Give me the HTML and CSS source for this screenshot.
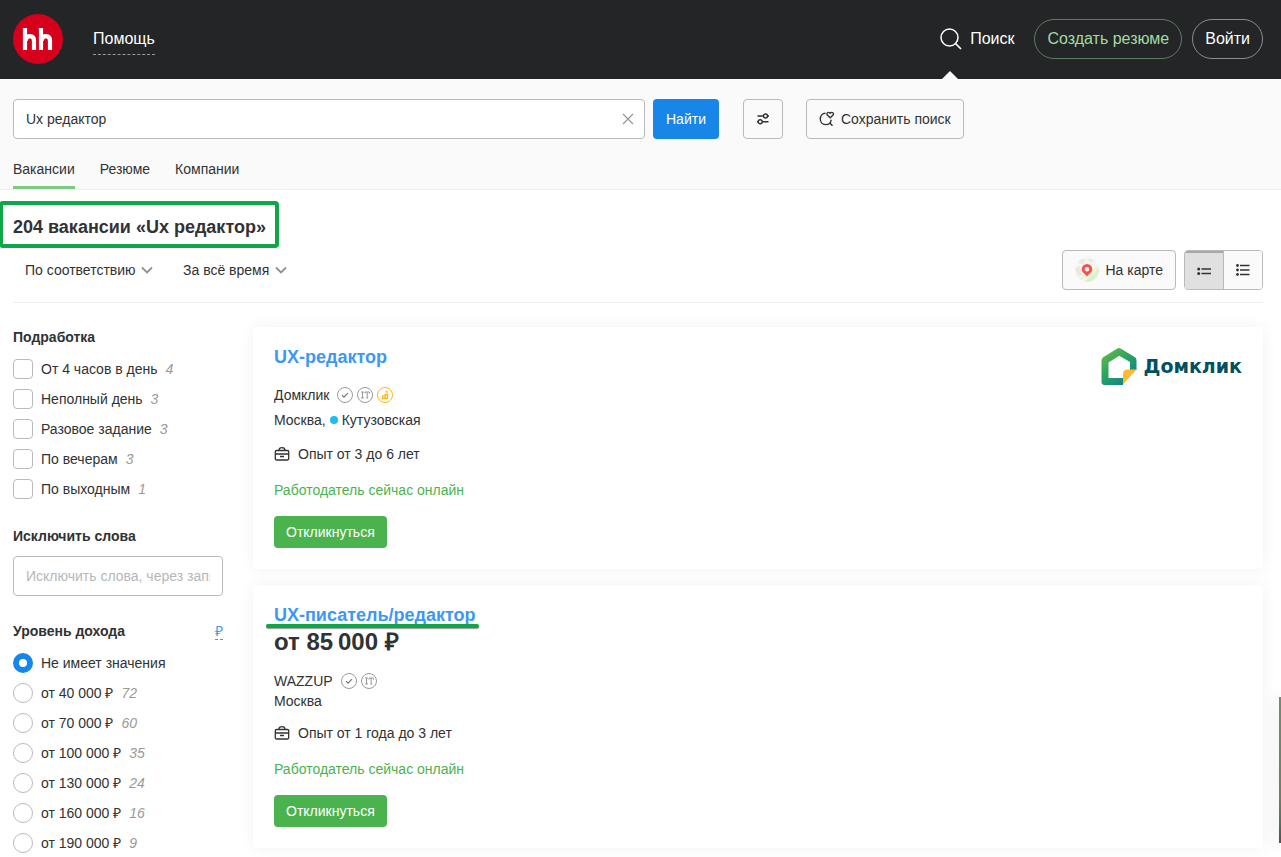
FILE: index.html
```
<!DOCTYPE html>
<html lang="ru">
<head>
<meta charset="utf-8">
<title>Вакансии «Ux редактор»</title>
<link rel="stylesheet" href="styles.css">
</head>
<body>
<svg class="sprite" aria-hidden="true">
  <symbol id="i-check" viewBox="0 0 16 16"><circle cx="8" cy="8" r="7.5" fill="none" stroke="#9a9a9a"/><path d="M5 8.200 7 10.200 11 6.200" fill="none" stroke="#777" stroke-width="1.200"/></symbol>
  <symbol id="i-it" viewBox="0 0 16 16"><circle cx="8" cy="8" r="7.5" fill="none" stroke="#9a9a9a"/><path d="M4 5h3M5.500 5v6M4 11h3M8 6.500V5h4.500v1.500M10.200 5v6M9.200 11h2" fill="none" stroke="#999"/></symbol>
  <symbol id="i-award" viewBox="0 0 16 16"><circle cx="8" cy="8" r="7.5" fill="none" stroke="#fcb816"/><circle cx="9.500" cy="4.800" r="1.300" fill="#fcc94d"/><path d="M5.500 8.500v3h5V7.500H8.200v4M5.500 8.800h2.700" fill="none" stroke="#fcb816" stroke-width="1.300"/></symbol>
  <symbol id="i-case" viewBox="0 0 16 16"><path d="M2.500 4.500h11a1.200 1.200 0 0 1 1.200 1.200v7.100a1.200 1.200 0 0 1-1.200 1.200h-11a1.200 1.200 0 0 1-1.200-1.200V5.700a1.200 1.200 0 0 1 1.200-1.200zM5 4.500C5 2.500 6 1.700 8 1.700s3 .8 3 2.800M1.300 8h13.400M6 10.500h4" fill="none" stroke="#303233" stroke-width="1.300"/></symbol>
  <symbol id="i-chevron" viewBox="0 0 12 8"><path d="M1 1.500 6 6.500 11 1.500" fill="none" stroke="#8e9194" stroke-width="1.800"/></symbol>
</svg>

<header class="header">
  <a class="logo" href="#" aria-label="hh">
    <svg width="50" height="50" viewBox="0 0 50 50"><circle cx="25" cy="25" r="25" fill="#d6001c"/><path d="M12 14v22M12.500 26.500c.6-3 2.200-4.300 4.500-4.300 2.800 0 4 1.800 4 4.600V36M28 14v22M28.500 26.500c.6-3 2.200-4.300 4.500-4.300 2.800 0 4 1.800 4 4.600V36" fill="none" stroke="#fff" stroke-width="4.200"/></svg>
  </a>
  <a class="help" href="#">Помощь</a>
  <nav class="header-actions">
    <a class="search-link" href="#">
      <svg width="22" height="22" viewBox="0 0 22 22"><circle cx="9.500" cy="9.500" r="8.500" fill="none" stroke="#fff" stroke-width="1.500"/><path d="M15.500 15.500 21 21" stroke="#fff" stroke-width="1.700"/></svg>
      <span>Поиск</span>
    </a>
    <a class="pill pill-green" href="#">Создать резюме</a>
    <a class="pill" href="#">Войти</a>
  </nav>
</header>

<section class="search">
  <form class="search-form">
    <div class="search-box">
      <input class="search-input" type="text" value="Ux редактор" aria-label="Поисковый запрос">
      <button class="clear" type="button" aria-label="Очистить"><svg width="12" height="12" viewBox="0 0 12 12"><path d="M1 1l10 10M11 1l-10 10" stroke="#999" stroke-width="1.300"/></svg></button>
    </div>
    <button class="btn-find" type="button">Найти</button>
    <button class="btn-outline btn-square" type="button" aria-label="Фильтры">
      <svg width="12" height="12" viewBox="0 0 12 12" fill="none" stroke="#303233" stroke-width="1.400"><circle cx="8.500" cy="3" r="2"/><circle cx="3.200" cy="8.800" r="2"/><path d="M.5 3h6M10.500 3H12M0 8.800h1.200M5.200 8.800h6.300"/></svg>
    </button>
    <button class="btn-outline btn-save" type="button">
      <svg width="16" height="16" viewBox="0 0 16 16" fill="none" stroke="#303233" stroke-width="1.400"><path d="M6.500 2.200C3.300 2.200 1.300 4.800 1.300 8s2.200 5.600 5.200 5.600c3 0 5.400-1.800 5.700-4.900M10.500 11.500l3 3.300"/><path d="M11.200 6.800 8.300 4C7 2.400 9.300.2 11.200 2.300c1.900-2.100 4.200.1 2.900 1.700z"/></svg>
      <span>Сохранить поиск</span>
    </button>
  </form>
  <nav class="tabs">
    <a class="tab tab-active" href="#">Вакансии</a>
    <a class="tab" href="#">Резюме</a>
    <a class="tab" href="#">Компании</a>
  </nav>
</section>

<main class="main">
  <h1 class="title"><span class="marked">204 вакансии «Ux редактор»</span></h1>
  <div class="toolbar">
    <div class="dropdown"><select aria-label="Сортировка"><option>По соответствию</option></select><svg width="12" height="8"><use href="#i-chevron"/></svg></div>
    <div class="dropdown"><select aria-label="Период"><option>За всё время</option></select><svg width="12" height="8"><use href="#i-chevron"/></svg></div>
    <div class="views">
      <button class="btn-outline btn-map" type="button">
        <svg width="24" height="24" viewBox="0 0 24 24"><clipPath id="map"><circle cx="12" cy="12" r="12"/></clipPath><g clip-path="url(#map)"><path fill="#f5f5f2" d="M0 0h24v24H0z"/><path d="M0 10l5-2 2 9-4 1zM3 4l5 3 3-6-4-1zM13 0l2 5 5-3z" fill="#e8e8e5"/><path d="M9 24 24 11v13z" fill="#d8f2cc"/><path d="M5 22 24 9" stroke="#fbefb8" stroke-width="2"/></g><path d="M12 18.500c-2.200-2.900-5.300-4.400-5.300-7.300a5.300 5.300 0 0 1 10.600 0c0 2.900-3.100 4.400-5.300 7.300z" fill="#f8504e"/><circle cx="12" cy="11.200" r="2.200" fill="#fff"/></svg>
        <span>На карте</span>
      </button>
      <div class="switch">
        <button class="switch-item switch-on" type="button" aria-label="Кратко"><svg width="14" height="14" viewBox="0 0 14 14" fill="#303233"><circle cx="1.700" cy="6" r="1.500"/><circle cx="1.700" cy="10.500" r="1.500"/><path d="M4.500 5.300H14v1.400H4.500zM4.500 9.800H14v1.400H4.500z"/></svg></button>
        <button class="switch-item" type="button" aria-label="Подробно"><svg width="14" height="14" viewBox="0 0 14 14" fill="#303233"><circle cx="1.500" cy="2.500" r="1.400"/><circle cx="1.500" cy="7" r="1.400"/><circle cx="1.500" cy="11.500" r="1.400"/><path d="M4 1.800H13.500v1.500H4zM4 6.300H13.500v1.500H4zM4 10.800H13.500v1.500H4z"/></svg></button>
      </div>
    </div>
  </div>

  <div class="content">
    <aside class="filters">
      <h2 class="filter-title">Подработка</h2>
      <div class="options">
        <label class="option"><input class="check" type="checkbox"><span>От 4 часов в день</span><i>4</i></label>
        <label class="option"><input class="check" type="checkbox"><span>Неполный день</span><i>3</i></label>
        <label class="option"><input class="check" type="checkbox"><span>Разовое задание</span><i>3</i></label>
        <label class="option"><input class="check" type="checkbox"><span>По вечерам</span><i>3</i></label>
        <label class="option"><input class="check" type="checkbox"><span>По выходным</span><i>1</i></label>
      </div>
      <h2 class="filter-title"><label for="exclude">Исключить слова</label></h2>
      <input class="exclude" id="exclude" type="text" placeholder="Исключить слова, через запятую">
      <div class="filter-head">
        <h2 class="filter-title">Уровень дохода</h2>
        <button class="currency" type="button">₽</button>
      </div>
      <div class="options">
        <label class="option"><input class="radio" type="radio" name="pay" checked><span>Не имеет значения</span></label>
        <label class="option"><input class="radio" type="radio" name="pay"><span>от 40 000 ₽</span><i>72</i></label>
        <label class="option"><input class="radio" type="radio" name="pay"><span>от 70 000 ₽</span><i>60</i></label>
        <label class="option"><input class="radio" type="radio" name="pay"><span>от 100 000 ₽</span><i>35</i></label>
        <label class="option"><input class="radio" type="radio" name="pay"><span>от 130 000 ₽</span><i>24</i></label>
        <label class="option"><input class="radio" type="radio" name="pay"><span>от 160 000 ₽</span><i>16</i></label>
        <label class="option"><input class="radio" type="radio" name="pay"><span>от 190 000 ₽</span><i>9</i></label>
      </div>
    </aside>

    <div class="results">
      <article class="card">
        <div class="card-body">
          <h3 class="card-title"><a href="#">UX-редактор</a></h3>
          <div class="company"><span class="company-name">Домклик</span><svg width="16" height="16"><use href="#i-check"/></svg><svg width="16" height="16"><use href="#i-it"/></svg><svg width="16" height="16"><use href="#i-award"/></svg></div>
          <div class="place place-metro"><span>Москва,</span><span class="metro">Кутузовская</span></div>
          <div class="exp"><svg width="16" height="16"><use href="#i-case"/></svg><span>Опыт от 3 до 6 лет</span></div>
          <div class="online">Работодатель сейчас онлайн</div>
          <button class="apply" type="button">Откликнуться</button>
        </div>
        <a class="brand" href="#">
          <svg width="36" height="38" viewBox="0 0 36 38"><defs><linearGradient id="dg" x1="0" y1="0" x2="0.800" y2="1"><stop offset="0" stop-color="#6fbe44"/><stop offset="0.500" stop-color="#2ba35f"/><stop offset="1" stop-color="#0a7f93"/></linearGradient></defs><path fill="url(#dg)" fill-rule="evenodd" d="M16 1.700q2-1.200 4 0l14 8.500q1.500 1 1.500 3V23H29V15L18.200 8.800 7.500 15.500V31H22v7H3.500Q.5 38 .5 35V13.500q0-2 1.700-3.200z"/><path fill="#fdbb30" d="M22 37.500V27q0-4.500 4.500-4.500H35.500z"/></svg>
          <span>Домклик</span>
        </a>
      </article>
      <article class="card">
        <div class="card-body">
          <h3 class="card-title"><a class="underlined" href="#">UX-писатель/редактор</a></h3>
          <div class="salary">от 85&#8239;000 ₽</div>
          <div class="company"><span class="company-name">WAZZUP</span><svg width="16" height="16"><use href="#i-check"/></svg><svg width="16" height="16"><use href="#i-it"/></svg></div>
          <div class="place">Москва</div>
          <div class="exp"><svg width="16" height="16"><use href="#i-case"/></svg><span>Опыт от 1 года до 3 лет</span></div>
          <div class="online">Работодатель сейчас онлайн</div>
          <button class="apply" type="button">Откликнуться</button>
        </div>
      </article>
    </div>
  </div>
</main>
<div class="side-widget"></div>
</body>
</html>
```
FILE: styles.css
```
* { box-sizing: border-box; }
body { margin: 0; background: #fff; color: #303233; font: 14px/20px "Liberation Sans", Arial, sans-serif; overflow-x: hidden; }
a { color: inherit; text-decoration: none; }
button, input, select { font: inherit; color: inherit; }
button { cursor: pointer; padding: 0; }
h1, h2, h3 { margin: 0; }
svg { flex: none; display: block; }
.sprite { position: absolute; width: 0; height: 0; }

.header { display: flex; align-items: center; height: 79px; padding: 0 18px 1px 13px; background: #232526; color: #fff; font-size: 16px; }
.help { margin-left: 30px; padding: 6px 0 5px; border-bottom: 1px dashed #999; line-height: 20px; }
.header-actions { display: flex; align-items: center; margin-left: auto; gap: 10px; }
.search-link { position: relative; display: flex; align-items: center; gap: 8px; height: 78px; margin-right: 10px; }
.search-link::after { content: ""; position: absolute; left: 2px; bottom: -1px; border: 8px solid transparent; border-top: 0; border-bottom-color: #fafafa; }
.pill { display: flex; align-items: center; height: 40px; padding: 0 12px; border: 1px solid #8b8d8e; border-radius: 20px; }
.pill-green { border-color: #5f7d61; color: #a3dba4; }

.search { padding: 20px 18px 0 13px; background: #fafafa; border-bottom: 1px solid #eee; }
.search-form { display: flex; }
.search-box { position: relative; flex: 0 1 632px; }
.search-input, .exclude { width: 100%; height: 40px; padding: 0 12px; border: 1px solid #b8babc; border-radius: 4px; background: #fff; outline: 0; }
.search-input { padding-right: 36px; }
.clear { position: absolute; right: 11px; top: 14px; border: 0; background: none; }
.btn-find { height: 40px; margin-left: 8px; padding: 0 13px; border: 0; border-radius: 4px; background: #1885e8; color: #fff; }
.btn-outline { display: flex; align-items: center; justify-content: center; gap: 6px; height: 40px; padding: 0 11px; border: 1px solid #b8babc; border-radius: 4px; background: #fafafa; }
.btn-square { width: 40px; margin: 0 23px 0 24px; }
.btn-save { padding: 0 12px; }
.tabs { display: flex; gap: 25px; }
.tab { padding: 20px 0 7px; border-bottom: 3px solid transparent; }
.tab-active { border-color: #7bcc7f; }

.main { padding: 25px 18px 0 13px; }
.title { font-size: 18px; line-height: 24px; }
.marked { position: relative; }
.marked::after { content: ""; position: absolute; inset: -16px -13px -11px -14px; border: 4px solid #0fa64a; border-radius: 4px; }
.toolbar { display: flex; align-items: center; gap: 30px; margin-top: 11px; padding: 0 0 12px 12px; border-bottom: 1px solid #eee; }
.dropdown { display: flex; align-items: center; gap: 5px; }
.dropdown select { appearance: none; padding: 0; border: 0; background: none; }
.views { display: flex; gap: 8px; margin-left: auto; }
.btn-map { padding: 0 12px; }
.switch { display: flex; border: 1px solid #b8babc; border-radius: 4px; overflow: hidden; }
.switch-item { display: flex; align-items: center; justify-content: center; width: 38px; height: 38px; border: 0; background: #fafafa; }
.switch-on { width: 39px; border-right: 1px solid #b8babc; background: #e0e0e0; box-shadow: inset 0 2px #a6a8aa; }

.content { display: grid; grid-template-columns: 210px 1fr; gap: 30px; padding-top: 24px; }
.filter-title { font-size: 14px; line-height: 20px; }
.options { padding: 7px 0 22px; }
.option { display: flex; align-items: center; height: 30px; gap: 8px; }
.option i { color: #999; }
.check, .radio { appearance: none; flex: none; width: 20px; height: 20px; margin: 0; border: 1px solid #b8babc; border-radius: 4px; background: #fff; }
.radio { border-radius: 50%; }
.radio:checked { border: 6px solid #1885e8; }
.exclude { margin: 10px 0 25px; }
.exclude::placeholder { color: #b5b7b9; }
.filter-head { display: flex; justify-content: space-between; align-items: center; }
.currency { border: 0; border-bottom: 1px dashed #3d98f4; background: none; color: #3d98f4; line-height: 16px; }

.results { display: flex; flex-direction: column; gap: 16px; min-width: 0; padding-bottom: 16px; }
.card { display: flex; justify-content: space-between; align-items: flex-start; padding: 18px 21px 21px; border-radius: 4px; background: #fff; box-shadow: 0 0 16px rgba(0, 0, 0, 0.06); }
.card-title { color: #3d98f4; font-size: 18px; line-height: 24px; }
.underlined { position: relative; }
.underlined::after { content: ""; position: absolute; left: -8px; right: -3px; bottom: -3px; height: 4px; border-radius: 2px; background: #0fa64a; box-shadow: 0 1px 1px #999; }
.salary { padding-top: 2px; font-size: 24px; font-weight: bold; line-height: 26px; }
.company { display: flex; align-items: center; gap: 4px; margin-top: 16px; }
.company-name { margin-right: 4px; }
.place-metro { display: flex; gap: 4px; padding: 5px 0 2px; }
.metro { display: flex; align-items: center; gap: 4px; }
.metro::before { content: ""; width: 8px; height: 8px; border-radius: 50%; background: #1ebcef; }
.exp { display: flex; align-items: center; gap: 8px; margin-top: 12px; }
.online { margin-top: 16px; color: #4bb34e; }
.apply { height: 32px; margin-top: 16px; padding: 0 12px; border: 0; border-radius: 4px; background: #4bb34e; color: #fff; }
.brand { display: flex; align-items: center; gap: 6px; padding-top: 2px; color: #04505f; font: bold 19px/24px "DejaVu Sans", sans-serif; }

.side-widget { position: fixed; right: 0; bottom: 14px; width: 2px; height: 146px; background: linear-gradient(#6d8e6c, #6f7f60 70%, #55755a 85%, #505050); box-shadow: 0 0 16px rgba(0, 0, 0, 0.3); }
```
